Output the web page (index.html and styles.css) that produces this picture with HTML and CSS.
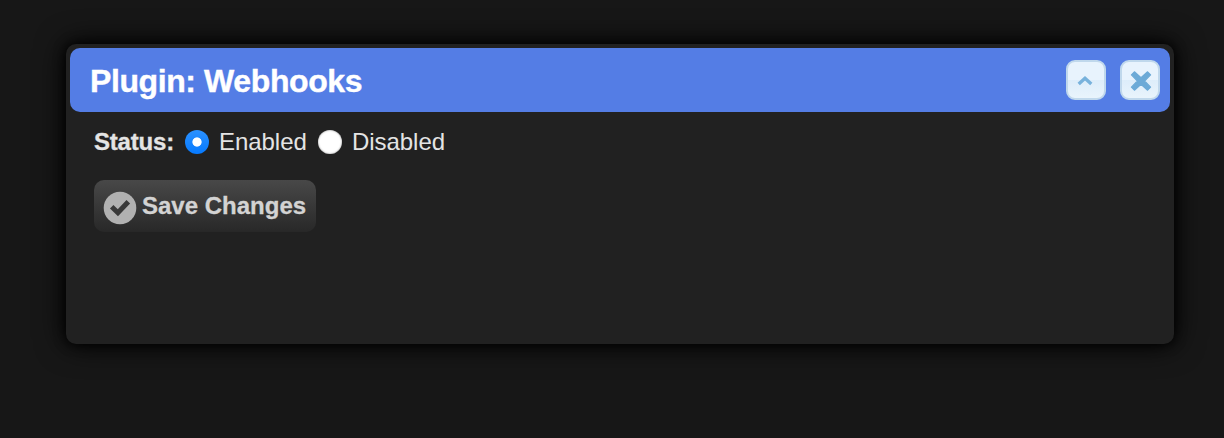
FILE: index.html
```html
<!DOCTYPE html>
<html lang="en">
<head>
<meta charset="utf-8">
<title>Plugin: Webhooks</title>
<link rel="stylesheet" href="styles.css">
</head>
<body>
<main class="dialog">
  <header class="titlebar">
    <h1 class="title">Plugin: Webhooks</h1>
    <button class="tool" aria-label="Collapse">
      <svg width="36" height="36" viewBox="0 0 36 36"><path d="M10.700 22 17 16.300l6.300 5.700" fill="none" stroke="#78b2dc" stroke-width="3.400"/></svg>
    </button>
    <button class="tool" aria-label="Close">
      <svg width="36" height="36" viewBox="0 0 36 36"><path d="m12.400 9.800 6.600 6 6.600-6 3 3-6 6.200 6 6.200-3 3-6.600-6-6.600 6-3-3 6-6.200-6-6.200z" fill="#6caad7" stroke="#6caad7" stroke-width="1.200" stroke-linejoin="round"/></svg>
    </button>
  </header>
  <form class="content">
    <div class="status">
      <span class="status-label">Status:</span>
      <label class="option"><input class="radio" type="radio" name="status" checked><span class="option-text">Enabled</span></label>
      <label class="option"><input class="radio" type="radio" name="status"><span class="option-text">Disabled</span></label>
    </div>
    <button class="save" type="button">
      <svg class="check" width="34" height="34" viewBox="0 0 34 34"><circle cx="17" cy="17" r="16.300" fill="#b1b1b1"/><path d="m8.700 15.800 6.200 5.900L25.300 10.800" fill="none" stroke="#393939" stroke-width="5"/></svg>
      <span class="save-text">Save Changes</span>
    </button>
  </form>
</main>
</body>
</html>
```

FILE: styles.css
```css
* { box-sizing: border-box; }
body {
  margin: 0;
  height: 438px;
  padding: 44px 50px 0 66px;
  background: #171717;
  font-family: "Liberation Sans", Arial, sans-serif;
  overflow: hidden;
}
.dialog {
  height: 300px;
  padding: 4px;
  border-radius: 10px;
  background: #212121;
  box-shadow: 0 0 30px #000, 0 0 12px #000;
}
.titlebar {
  display: flex;
  align-items: center;
  gap: 14px;
  height: 64px;
  padding: 0 10px 0 20px;
  border-radius: 10px;
  background: #547de5;
}
.title {
  flex: 1;
  margin: 0;
  padding-top: 2px;
  color: #fff;
  font-size: 32px;
  line-height: 38px;
  letter-spacing: -0.4px;
  -webkit-text-stroke: 0.4px #fff;
}
.tool {
  display: block;
  width: 40px;
  height: 40px;
  padding: 0;
  border: 2px solid #c0d8ec;
  border-radius: 9px;
  background: linear-gradient(#e8f3fd 50%, #ddedfa 50%, #e9f4fc);
}
.tool svg { display: block; }
.content { padding: 16px 24px 0; }
.status {
  display: flex;
  align-items: center;
  height: 28px;
  color: #e4e4e4;
  font-size: 24px;
  line-height: 28px;
}
.status-label {
  width: 91px;
  font-weight: bold;
  letter-spacing: -0.2px;
  -webkit-text-stroke: 0.3px #e4e4e4;
}
.option { display: flex; align-items: center; gap: 10px; width: 133px; }
.option-text { letter-spacing: -0.05px; }
.radio {
  appearance: none;
  flex: none;
  width: 24px;
  height: 24px;
  margin: 0;
  border-radius: 50%;
  background: #fff;
  box-shadow: inset 0 0 2px #888;
}
.radio:checked {
  background: radial-gradient(circle, #fff 4.200px, transparent 5px), linear-gradient(#2b91ff, #067aff);
  box-shadow: none;
}
.save {
  display: flex;
  align-items: center;
  gap: 5px;
  width: 222px;
  height: 52px;
  margin-top: 24px;
  padding: 0 0 0 9px;
  border: 0;
  border-radius: 10px;
  background: linear-gradient(#484848, #282828);
  color: #d3d3d3;
  font: bold 24px/28px "Liberation Sans", Arial, sans-serif;
}
.check { flex: none; margin-top: 4px; }
.save-text { white-space: nowrap; -webkit-text-stroke: 0.3px #d3d3d3; }
```
